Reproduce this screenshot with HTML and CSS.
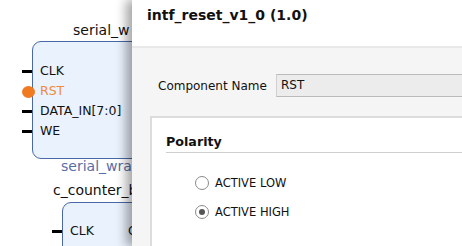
FILE: index.html
```html
<!DOCTYPE html>
<html lang="en">
<head>
    <meta charset="UTF-8">
    <title>intf_reset_v1_0</title>
    <link rel="stylesheet" href="styles.css">
</head>
<body>
    <div class="canvas">
        <div class="inst-name" style="left: 73px; top: 22px;">serial_w</div>
        <div class="block block-one">
            <div class="port"><span class="pin"></span>CLK</div>
            <div class="port port-reset"><span class="pin-dot"></span>RST</div>
            <div class="port"><span class="pin"></span>DATA_IN[7:0]</div>
            <div class="port"><span class="pin"></span>WE</div>
        </div>
        <div class="inst-label" style="left: 61px; top: 158px;">serial_wra</div>
        <div class="inst-name" style="left: 53px; top: 182px;">c_counter_b</div>
        <div class="block block-two">
            <div class="port"><span class="pin"></span>CLK<span class="out">Q</span></div>
        </div>
    </div>
    <div class="dialog">
        <div class="dialog-head">intf_reset_v1_0 (1.0)</div>
        <div class="dialog-body">
            <div class="field-row">
                <label class="field-label">Component Name</label>
                <div class="field-input">RST</div>
            </div>
            <div class="group">
                <div class="group-title">Polarity</div>
                <div class="radio-list">
                    <div class="radio"><span class="radio-box"></span>ACTIVE LOW</div>
                    <div class="radio"><span class="radio-box checked"></span>ACTIVE HIGH</div>
                </div>
            </div>
        </div>
    </div>
</body>
</html>
```

FILE: styles.css
```css
* {
    box-sizing: border-box;
}
body {
    margin: 0;
    width: 462px;
    height: 246px;
    overflow: hidden;
    display: flex;
    font-family: "DejaVu Sans", sans-serif;
    background-color: #fff;
}
.canvas {
    width: 132px;
    flex: none;
    position: relative;
    overflow: hidden;
    background-color: #fff;
}
.inst-name, .inst-label {
    position: absolute;
    font-size: 14px;
    color: #111;
    white-space: nowrap;
    line-height: 17px;
}
.inst-label {
    color: #5a6ea6;
}
.block {
    position: absolute;
    background-color: #eaf2fd;
    border: 1px solid #4a68a8;
    border-radius: 9px;
    padding-top: 19px;
}
.block-one {
    left: 32px;
    top: 41px;
    width: 140px;
    height: 118px;
}
.block-two {
    left: 62px;
    top: 202px;
    width: 120px;
    height: 80px;
    padding-top: 18px;
}
.port {
    position: relative;
    height: 20px;
    line-height: 20px;
    font-size: 12.5px;
    padding-left: 7px;
    color: #111;
    white-space: nowrap;
}
.port-reset {
    color: #f08a3a;
}
.pin {
    position: absolute;
    left: -11px;
    top: 9px;
    width: 10px;
    height: 3px;
    background-color: #000;
}
.pin-dot {
    position: absolute;
    left: -11px;
    top: 5px;
    width: 13px;
    height: 12px;
    border-radius: 50%;
    background-color: #f07a20;
}
.out {
    margin-left: 34px;
}
.dialog {
    flex: 1;
    display: flex;
    flex-direction: column;
    position: relative;
    overflow: hidden;
    box-shadow: -6px 0 10px rgba(0, 0, 0, 0.35);
    background-color: #f5f5f5;
}
.dialog-head {
    flex: none;
    height: 48px;
    background-color: #fff;
    padding-left: 15px;
    font-size: 14px;
    font-weight: bold;
    line-height: 31px;
    color: #111;
    border-bottom: 2px solid #e8e8e8;
}
.dialog-body {
    flex: 1;
    padding: 26px 0 0 18px;
}
.field-row {
    display: flex;
    align-items: center;
    height: 23px;
}
.field-label {
    flex: none;
    width: 126px;
    padding-left: 8px;
    font-size: 12px;
    color: #111;
}
.field-input {
    flex: 1;
    height: 23px;
    line-height: 21px;
    padding-left: 4px;
    font-size: 12px;
    color: #111;
    background-color: #ececec;
    border-top: 1px solid #bbb;
    border-bottom: 1px solid #bbb;
    border-left: 1px solid #d0d0d0;
}
.group {
    margin-top: 19px;
    height: 200px;
    background-color: #fff;
    border-top: 2px solid #dcdcdc;
    border-left: 2px solid #dcdcdc;
    padding: 15px 0 0 14px;
}
.group-title {
    font-size: 12.7px;
    font-weight: bold;
    color: #111;
    line-height: 18px;
    padding-bottom: 1px;
    border-bottom: 1px solid #cfcfcf;
}
.radio-list {
    padding: 20px 0 0 29px;
    display: flex;
    flex-direction: column;
    gap: 10px;
}
.radio {
    display: flex;
    align-items: center;
    gap: 6px;
    font-size: 11.5px;
    color: #111;
    height: 19px;
}
.radio-box {
    width: 14px;
    height: 14px;
    border: 1px solid #8a8a8a;
    border-radius: 50%;
    background-color: #fff;
    position: relative;
}
.radio-box.checked::after {
    content: "";
    position: absolute;
    left: 3px;
    top: 3px;
    width: 6px;
    height: 6px;
    border-radius: 50%;
    background-color: #555;
}
```
